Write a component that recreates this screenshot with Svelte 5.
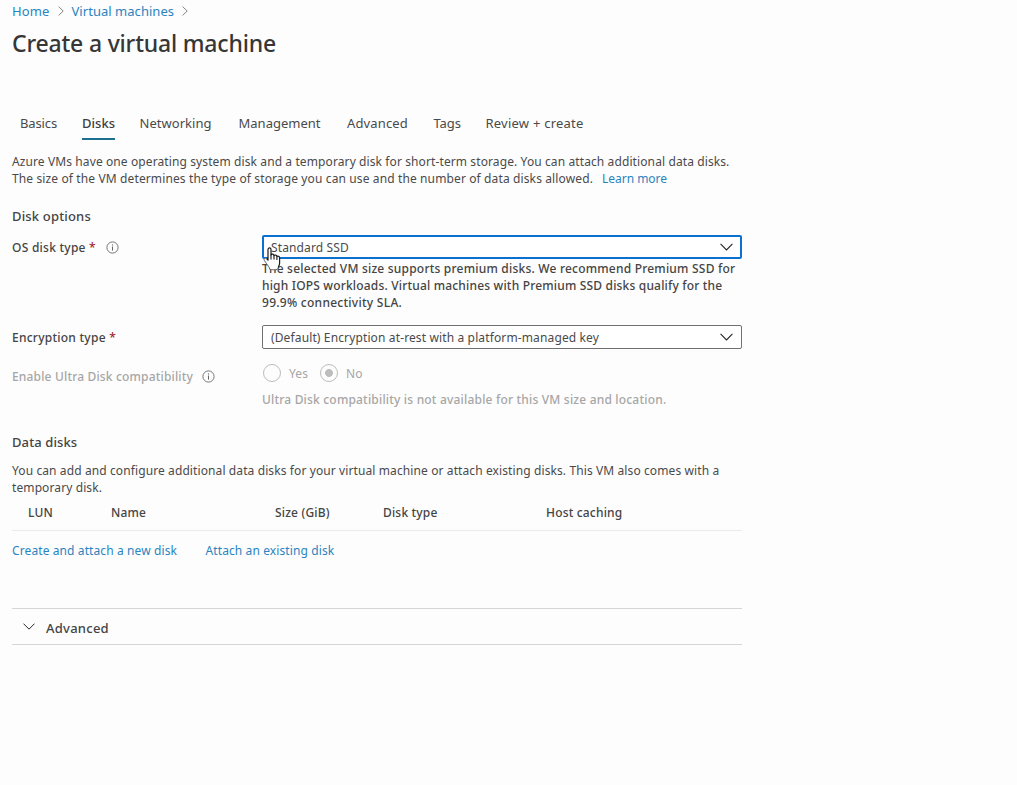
<script>
  const tabs = [
    { label: 'Basics', ls: -0.13 },
    { label: 'Disks', ls: 0.02, active: true },
    { label: 'Networking', ls: 0.03 },
    { label: 'Management', ls: 0.01 },
    { label: 'Advanced', ls: 0.15 },
    { label: 'Tags', ls: -0.1 },
    { label: 'Review + create', ls: 0.23 }
  ];
  const columns = ['LUN', 'Name', 'Size (GiB)', 'Disk type', 'Host caching'];
</script>

{#snippet info()}
  <svg class="info" width="13" height="13" viewBox="0 0 13 13">
    <circle cx="6.5" cy="6.5" r="5.6" fill="none" stroke="#666" stroke-width="0.9" />
    <path d="M6.5 5.5V9.6" stroke="#666" stroke-width="1" />
    <circle cx="6.5" cy="3.9" r="0.65" fill="#666" />
  </svg>
{/snippet}

{#snippet chevron(w, h)}
  <svg class="chev" width={w} height={h} viewBox="0 0 14 8" fill="none" stroke="#222" stroke-width="1.15">
    <path d="M0.6 0.7L7 7.1L13.4 0.7" />
  </svg>
{/snippet}

{#snippet crumbArrow()}
  <svg class="crumb" width="6" height="10" viewBox="0 0 6 10" fill="none" stroke="#777" stroke-width="0.9">
    <path d="M0.6 0.6L5.2 5L0.6 9.4" />
  </svg>
{/snippet}

<main>
  <nav class="crumbs">
    <a class="home">Home</a>{@render crumbArrow()}<a class="vm">Virtual machines</a>{@render crumbArrow()}
  </nav>
  <h1>Create a virtual machine</h1>

  <div class="tabs">
    {#each tabs as tab}
      <span class="tab" class:active={tab.active} style="letter-spacing: {tab.ls}px">{tab.label}</span>
    {/each}
  </div>

  <p class="intro">
    Azure VMs have one operating system disk and a temporary disk for short-term storage. You can attach additional data disks.<br />
    <span class="wide">The size of the VM determines the type of storage you can use and the number of data disks allowed.</span><a class="learn">Learn more</a>
  </p>

  <h2>Disk options</h2>
  <div class="row os">
    <div class="label">OS disk type <span class="req">*</span>{@render info()}</div>
    <div class="field">
      <div class="select focus"><span>Standard SSD</span>{@render chevron(13, 8)}
        <svg class="hand" width="19" height="24" viewBox="0 0 19 24">
          <path d="M5 13.2V2.6C5 0.4 8 0.4 8 2.6V8C8.4 6.7 10.8 6.9 11 8.6C11.8 7.5 13.7 8 13.9 9.5C14.9 8.7 16.6 9.3 16.6 11V16C16.6 18.6 15.2 19.4 15 22.4H6.6C6.4 19.8 4.6 18.4 3.2 16.2L1.2 13.2C0.4 11.7 2.3 10.3 3.6 11.7Z" fill="#fff" />
          <path d="M3.6 11.7L5 13.2V2.6C5 0.4 8 0.4 8 2.6V8C8.4 6.7 10.8 6.9 11 8.6C11.8 7.5 13.7 8 13.9 9.5C14.9 8.7 16.6 9.3 16.6 11V16C16.6 18.2 15.6 19.2 15.2 20.6" fill="none" stroke="#1a1a1a" stroke-width="1.2" stroke-linejoin="round" />
          <path d="M15.2 20.6L14.6 22.2C12.5 23 9 23 6.8 22.2C6.4 19.8 4.6 18.4 3.2 16.2L1.2 13.2C0.4 11.7 2.3 10.3 3.6 11.7" fill="none" stroke="#555" stroke-width="0.9" />
          <path d="M8 7.6V12.4M11 8.6V12.6M13.9 9.5V13" stroke="#1a1a1a" stroke-width="1.1" />
        </svg>
      </div>
      <p class="help">
        The selected VM size supports premium disks. We recommend Premium SSD for<br />
        <span class="tight">high IOPS workloads. Virtual machines with Premium SSD disks qualify for the</span><br />
        <span class="loose">99.9% connectivity SLA.</span>
      </p>
    </div>
  </div>
  <div class="row enc">
    <div class="label">Encryption type <span class="req">*</span></div>
    <div class="field">
      <div class="select"><span>(Default) Encryption at-rest with a platform-managed key</span>{@render chevron(13, 8)}</div>
    </div>
  </div>
  <div class="row ultra">
    <div class="label">Enable Ultra Disk compatibility{@render info()}</div>
    <div class="field">
      <div class="radios">
        <i class="radio"></i><span class="yes">Yes</span>
        <i class="radio on"></i><span>No</span>
      </div>
      <p class="note">Ultra Disk compatibility is not available for this VM size and location.</p>
    </div>
  </div>

  <h2 class="data">Data disks</h2>
  <p class="body">
    You can add and configure additional data disks for your virtual machine or attach existing disks. This VM also comes with a<br />
    temporary disk.
  </p>
  <div class="thead">
    {#each columns as column}<span>{column}</span>{/each}
  </div>
  <div class="links">
    <a>Create and attach a new disk</a><a>Attach an existing disk</a>
  </div>

  <div class="accordion">{@render chevron(12, 7)}<span>Advanced</span></div>
</main>

<style>
  :global(body) { background: #fdfdfd; }
  main {
    box-sizing: border-box;
    width: 742px;
    height: 785px;
    padding-left: 12px;
    font: 12px/17px "Noto Sans", "Open Sans", sans-serif;
    letter-spacing: 0.105px;
    color: #4a4a4a;
    white-space: nowrap;
  }
  p, h1, h2 { margin: 0; }
  a { color: #2a84bf; }
  .crumbs { display: flex; align-items: center; height: 22px; font-size: 13px; }
  .home { width: 46px; }
  .vm { width: 110.5px; letter-spacing: 0.04px; }
  .crumb { margin-right: 7.5px; }
  h1 { height: 44px; font-size: 23px; line-height: 43px; font-weight: 500; letter-spacing: -0.19px; color: #363636; }
  .tabs {
    display: grid;
    grid-template-columns: 62px 57.5px 99px 108.5px 86.5px 52px auto;
    justify-items: start;
    margin-top: 46px;
    padding-left: 8px;
    height: 28px;
  }
  .tab { box-sizing: border-box; height: 28px; font-size: 13px; line-height: 23px; }
  .active { font-weight: 500; border-bottom: 2px solid #1c6f91; color: #404040; }
  .intro { margin-top: 13px; }
  .wide { letter-spacing: 0.123px; }
  .learn { margin-left: 9px; letter-spacing: -0.02px; }
  h2 { margin-top: 20px; height: 18px; line-height: 18px; font-size: 13px; font-weight: 500; letter-spacing: 0.17px; color: #444; }
  .row { display: grid; grid-template-columns: 250px 480px; }
  .label { display: flex; align-items: center; height: 24px; font-weight: 500; letter-spacing: 0.25px; white-space: pre; color: #444; }
  .req { color: #a4262c; }
  .info { margin-left: 9px; }
  .os { margin-top: 10px; height: 90px; }
  .os .info { margin-left: 10px; }
  .enc { height: 24px; }
  .select {
    position: relative;
    display: flex;
    align-items: center;
    justify-content: space-between;
    box-sizing: border-box;
    height: 24px;
    padding: 0 8px;
    border: 1px solid #707070;
    border-radius: 2px;
    background: #fff;
    letter-spacing: 0.13px;
  }
  .focus { border: 2px solid #0b70d0; padding: 0 7px; }
  .hand { position: absolute; left: -1px; top: 10px; }
  .help, .note { font-weight: 500; letter-spacing: 0.21px; }
  .help { margin-top: 1px; color: #444; }
  .tight { letter-spacing: 0.18px; }
  .loose { letter-spacing: 0.27px; }
  .ultra { margin-top: 12px; color: #a6a6a6; }
  .ultra .label { margin-top: 3px; letter-spacing: 0.17px; color: #a6a6a6; }
  .radios { display: flex; align-items: center; height: 24px; }
  .radio { box-sizing: border-box; width: 18px; height: 18px; margin: 0 8px 0 1px; border: 1px solid #bcbcbc; border-radius: 50%; }
  .on { background: radial-gradient(circle, #bdbdbd 0 3.6px, transparent 4.2px); }
  .yes { width: 30px; }
  .note { margin-top: 6px; letter-spacing: 0.19px; }
  .data { margin-top: 25px; letter-spacing: 0.1px; }
  .body { margin-top: 11px; }
  .thead {
    display: grid;
    grid-template-columns: 83px 164px 108px 163px 1fr;
    height: 34px;
    line-height: 34px;
    padding-left: 16px;
    border-bottom: 1px solid #ebebeb;
    font-weight: 500;
    letter-spacing: 0.18px;
    color: #444;
  }
  .links { display: flex; gap: 28.5px; margin-top: 11px; }
  .accordion {
    display: flex;
    align-items: center;
    gap: 11px;
    margin-top: 49px;
    height: 35px;
    padding-left: 11px;
    border: solid #d6d6d6;
    border-width: 1px 0;
    font-size: 13px;
    font-weight: 500;
    letter-spacing: 0.25px;
    color: #444;
  }
  .accordion span { padding-top: 4px; }
</style>
